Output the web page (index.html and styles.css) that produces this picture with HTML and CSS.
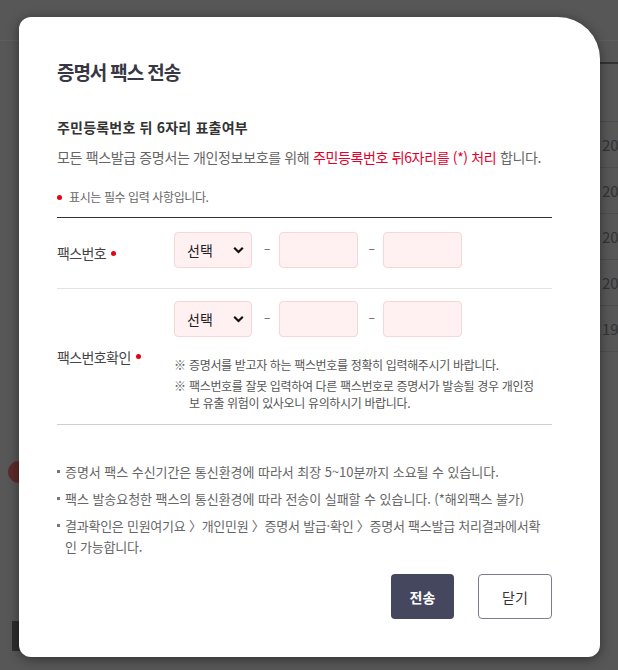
FILE: index.html
```html
<!DOCTYPE html>
<html lang="ko">
<head>
    <meta charset="UTF-8">
    <meta name="viewport" content="width=device-width, initial-scale=1.0">
    <title>증명서 팩스 전송</title>
    <link rel="stylesheet" href="styles.css">
</head>
<body>

<div class="page-behind">
    <div class="bg-table">
        <div class="bg-head">초</div>
        <div class="bg-row">2021</div>
        <div class="bg-row">2020</div>
        <div class="bg-row">2019</div>
        <div class="bg-row">2018</div>
        <div class="bg-row">1998</div>
    </div>
    <div class="bg-dot"></div>
    <div class="bg-block"></div>
</div>

<div class="modal">
    <h2 class="modal-title">증명서 팩스 전송</h2>

    <h3 class="sub-title">주민등록번호 뒤 6자리 표출여부</h3>
    <p class="desc">모든 팩스발급 증명서는 개인정보보호를 위해 <span class="red">주민등록번호 뒤6자리를 (*) 처리</span> 합니다.</p>

    <p class="required-note"><span class="dot"></span>표시는 필수 입력 사항입니다.</p>

    <div class="form-table">
        <div class="form-row">
            <div class="label">팩스번호<span class="dot"></span></div>
            <div class="field">
                <div class="fax-inputs">
                    <div class="select">선택
                        <svg width="11" height="8" viewBox="0 0 11 8"><path d="M1.2 1.8 L5.5 6 L9.8 1.8" fill="none" stroke="#111" stroke-width="2.2"/></svg>
                    </div>
                    <span class="dash">–</span>
                    <input type="text" class="num">
                    <span class="dash">–</span>
                    <input type="text" class="num">
                </div>
            </div>
        </div>
        <div class="form-row">
            <div class="label">팩스번호확인<span class="dot"></span></div>
            <div class="field">
                <div class="fax-inputs">
                    <div class="select">선택
                        <svg width="11" height="8" viewBox="0 0 11 8"><path d="M1.2 1.8 L5.5 6 L9.8 1.8" fill="none" stroke="#111" stroke-width="2.2"/></svg>
                    </div>
                    <span class="dash">–</span>
                    <input type="text" class="num">
                    <span class="dash">–</span>
                    <input type="text" class="num">
                </div>
                <ul class="notes">
                    <li>증명서를 받고자 하는 팩스번호를 정확히 입력해주시기 바랍니다.</li>
                    <li>팩스번호를 잘못 입력하여 다른 팩스번호로 증명서가 발송될 경우 개인정<br>보 유출 위험이 있사오니 유의하시기 바랍니다.</li>
                </ul>
            </div>
        </div>
    </div>

    <ul class="info-list">
        <li>증명서 팩스 수신기간은 통신환경에 따라서 최장 5~10분까지 소요될 수 있습니다.</li>
        <li>팩스 발송요청한 팩스의 통신환경에 따라 전송이 실패할 수 있습니다. (*해외팩스 불가)</li>
        <li class="tight">결과확인은 민원여기요 〉개인민원 〉증명서 발급·확인 〉증명서 팩스발급 처리결과에서확<br>인 가능합니다.</li>
    </ul>

    <div class="btn-area">
        <button class="btn btn-send">전송</button>
        <button class="btn btn-close">닫기</button>
    </div>
</div>

</body>
</html>
```

FILE: styles.css
```css
body {
    margin: 0;
    width: 618px;
    height: 670px;
    overflow: hidden;
    background-color: #575757;
    font-family: 'Noto Sans CJK KR', 'Noto Sans', sans-serif;
    position: relative;
}
.page-behind {
    position: absolute;
    left: 0;
    top: 40px;
    width: 618px;
    height: 630px;
    overflow: hidden;
    border-top: 1px solid #5e5e5e;
    box-sizing: border-box;
}
.bg-table {
    position: absolute;
    left: 560px;
    top: 21px;
    width: 58px;
    border-top: 2px solid #333;
}
.bg-head,
.bg-row {
    height: 45px;
    line-height: 45px;
    border-bottom: 1px solid #4d4d4d;
    padding-left: 42px;
    color: #333;
    font-size: 15px;
    white-space: nowrap;
}
.bg-head {
    height: 57px;
    line-height: 70px;
    padding-left: 58px;
    font-size: 13px;
    color: #2a2a2a;
}
.bg-dot {
    position: absolute;
    left: 8px;
    top: 420px;
    width: 22px;
    height: 22px;
    border-radius: 50%;
    background: #5e2a2a;
}
.bg-block {
    position: absolute;
    left: 12px;
    top: 580px;
    width: 20px;
    height: 30px;
    background: #2e2e2e;
}

.modal {
    position: relative;
    margin: 17px 0 0 19px;
    width: 581px;
    height: 640px;
    box-sizing: border-box;
    padding: 42px 48px 0 38px;
    background: #ffffff;
    border-radius: 12px 42px 12px 12px;
    box-shadow: 0 2px 12px rgba(0, 0, 0, 0.45);
    color: #333;
}
.modal-title {
    margin: 0;
    font-size: 19px;
    line-height: 26px;
    font-weight: bold;
    letter-spacing: -1.1px;
    color: #383845;
}
.sub-title {
    margin: 32px 0 0;
    font-size: 14px;
    line-height: 20px;
    font-weight: bold;
    letter-spacing: 0.2px;
    color: #333;
}
.desc {
    margin: 10px 0 0;
    font-size: 14px;
    line-height: 20px;
    letter-spacing: -0.35px;
    color: #666;
}
.red {
    color: #e3002b;
}
.required-note {
    margin: 21px 0 0;
    font-size: 12px;
    line-height: 18px;
    letter-spacing: -0.4px;
    color: #666;
    display: flex;
    align-items: center;
}
.dot {
    display: inline-block;
    width: 5px;
    height: 5px;
    border-radius: 50%;
    background: #e60012;
}
.required-note .dot {
    margin-right: 7px;
}
.form-table {
    margin-top: 11px;
    border-top: 1px solid #333;
    border-bottom: 1px solid #cfcfcf;
}
.form-row {
    display: flex;
    align-items: center;
}
.form-row + .form-row {
    border-top: 1px solid #e3e3e3;
}
.form-row:first-child .field {
    padding: 14px 0 20px;
}
.form-row:last-child .field {
    padding: 12px 0 13px;
}
.label {
    width: 117px;
    font-size: 14px;
    letter-spacing: -0.6px;
    color: #444;
    display: flex;
    align-items: center;
}
.label .dot {
    margin-left: 5px;
}
.fax-inputs {
    display: flex;
    align-items: center;
}
.select,
.num {
    height: 36px;
    box-sizing: border-box;
    background: #fff1f1;
    border: 1px solid #f6d6d6;
    border-radius: 4px;
}
.select {
    width: 78px;
    padding: 0 7px 0 12px;
    display: flex;
    align-items: center;
    justify-content: space-between;
    font-size: 14px;
    color: #222;
}
.num {
    width: 79px;
    margin: 0;
    padding: 0 8px;
}
.dash {
    font-size: 12px;
    color: #555;
    margin: -5px 8px 0 10px;
}
.select + .dash {
    margin-left: 12px;
    margin-right: 9px;
}
.notes {
    list-style: none;
    margin: 19px 0 0;
    padding: 0;
    font-size: 12px;
    line-height: 17px;
    letter-spacing: -0.35px;
    color: #555;
}
.notes li {
    padding-left: 15px;
    text-indent: -15px;
}
.notes li::before {
    content: '※';
    display: inline-block;
    width: 15px;
    text-indent: 0;
}
.notes li + li {
    margin-top: 4px;
}
.info-list {
    list-style: none;
    margin: 36px 0 0;
    padding: 0;
    font-size: 13px;
    line-height: 21px;
    letter-spacing: -0.05px;
    color: #666;
}
.info-list li {
    position: relative;
    padding-left: 8px;
}
.info-list li.tight {
    letter-spacing: -0.25px;
}
.info-list li + li {
    margin-top: 6px;
}
.info-list li::before {
    content: '';
    position: absolute;
    left: 0;
    top: 9px;
    width: 3px;
    height: 3px;
    background: #777;
}
.btn-area {
    display: flex;
    justify-content: flex-end;
    gap: 24px;
    margin-top: 17px;
}
.btn {
    height: 45px;
    border-radius: 4px;
    font-family: inherit;
    font-size: 14px;
    cursor: pointer;
}
.btn-send {
    width: 63px;
    border: none;
    background: #44475e;
    color: #fff;
    font-weight: bold;
}
.btn-close {
    width: 74px;
    border: 1px solid #7a7d8e;
    background: #fff;
    color: #333;
}
```
